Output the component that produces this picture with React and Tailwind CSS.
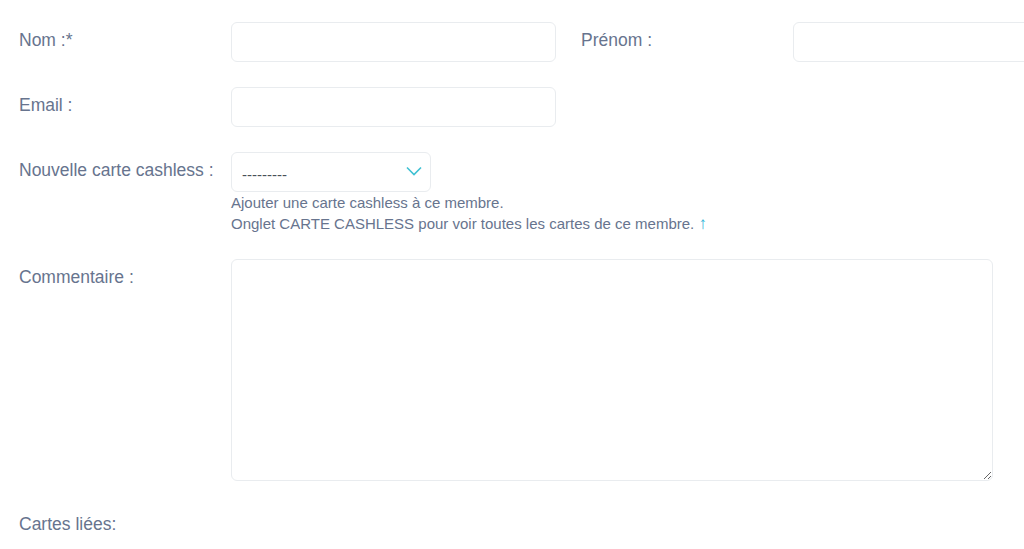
import React, { useState } from 'react';

const labelClass = 'w-[212px] shrink-0 pt-[6px] text-[17.5px] leading-6 text-[#67748e]';
const inputClass =
  'h-10 rounded-md border border-[#e9ecef] bg-white px-3 text-[15px] text-[#495057] outline-none focus:border-[#17c1e8]';

const Field = ({ label, children }) => (
  <div className="flex w-[562px] shrink-0">
    <label className={labelClass}>{label}</label>
    {children}
  </div>
);

const App = () => {
  const [member, setMember] = useState({
    nom: '',
    prenom: '',
    email: '',
    carte: '',
    commentaire: ''
  });

  const handleChange = (e) => {
    setMember({
      ...member,
      [e.target.name]: e.target.value
    });
  };

  return (
    <div
      className="min-h-[549px] overflow-hidden bg-white pl-[19px] pt-[22px]"
      style={{ fontFamily: '"Liberation Sans", Arial, sans-serif' }}
    >
      <div className="flex flex-col gap-[25px]">
        <div className="flex">
          <Field label="Nom :*">
            <input
              type="text"
              name="nom"
              value={member.nom}
              onChange={handleChange}
              className={`${inputClass} w-[325px]`}
            />
          </Field>
          <Field label="Prénom :">
            <input
              type="text"
              name="prenom"
              value={member.prenom}
              onChange={handleChange}
              className={`${inputClass} w-[325px]`}
            />
          </Field>
        </div>

        <Field label="Email :">
          <input
            type="email"
            name="email"
            value={member.email}
            onChange={handleChange}
            className={`${inputClass} w-[325px]`}
          />
        </Field>

        <div className="flex">
          <label className={labelClass}>Nouvelle carte cashless :</label>
          <div className="flex flex-col">
            <div className="relative w-[200px]">
              <select
                name="carte"
                value={member.carte}
                onChange={handleChange}
                className={`${inputClass} w-full appearance-none pl-[10px] pt-[6px] text-[#7b8699]`}
              >
                <option value="">---------</option>
              </select>
              <svg
                className="pointer-events-none absolute right-[9px] top-[14px]"
                width="16"
                height="10"
                viewBox="0 0 16 10"
                fill="none"
                stroke="#3fc1d3"
                strokeWidth="1.6"
              >
                <path d="M1 1.5 L8 8.5 L15 1.5" />
              </svg>
            </div>
            <p className="text-[15px] leading-[21px] text-[#67748e]">
              Ajouter une carte cashless à ce membre.
              <br />
              Onglet CARTE CASHLESS pour voir toutes les cartes de ce membre.{' '}
              <span className="text-[17px] text-[#2fb3d6]">↑</span>
            </p>
          </div>
        </div>

        <div className="flex">
          <label className={labelClass}>Commentaire :</label>
          <textarea
            name="commentaire"
            value={member.commentaire}
            onChange={handleChange}
            className="h-[222px] w-[762px] rounded-md border border-[#e9ecef] bg-white px-3 py-2 text-[15px] text-[#495057] outline-none"
          />
        </div>

        <div className="pt-[6px]">
          <label className="text-[17.5px] leading-6 text-[#67748e]">Cartes liées:</label>
        </div>
      </div>
    </div>
  );
};

export default App;
